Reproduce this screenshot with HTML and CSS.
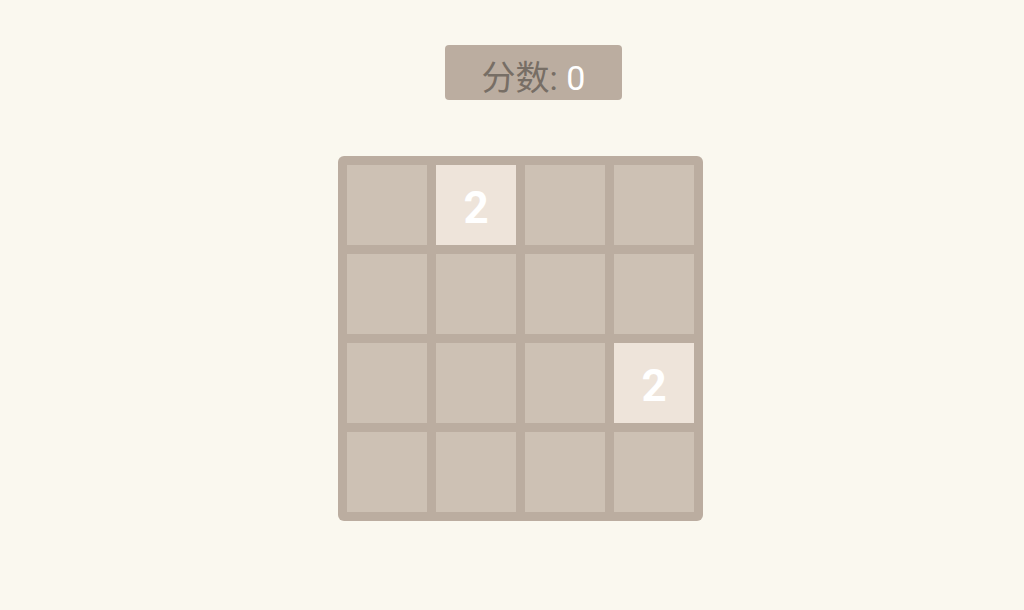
FILE: index.html
```html
<!DOCTYPE html>
<html lang="zh-CN">
<head>
    <meta charset="UTF-8">
    <title>2048</title>
    <link rel="stylesheet" href="styles.css">
</head>
<body>
    <div class="game">
        <div class="score-box">
            <p class="score-text"><span class="score-label">分数:</span> <span class="score-value">0</span></p>
        </div>

        <div class="board">
            <div class="cell"></div>
            <div class="cell tile-2">2</div>
            <div class="cell"></div>
            <div class="cell"></div>

            <div class="cell"></div>
            <div class="cell"></div>
            <div class="cell"></div>
            <div class="cell"></div>

            <div class="cell"></div>
            <div class="cell"></div>
            <div class="cell"></div>
            <div class="cell tile-2">2</div>

            <div class="cell"></div>
            <div class="cell"></div>
            <div class="cell"></div>
            <div class="cell"></div>
        </div>
    </div>
</body>
</html>
```

FILE: styles.css
```css
* {
    box-sizing: border-box;
    margin: 0;
    padding: 0;
}

body {
    font-family: Roboto, "Noto Sans CJK SC", sans-serif;
    background-color: #faf8ef;
    min-height: 100vh;
}

.game {
    display: flex;
    flex-direction: column;
    align-items: flex-start;
    padding-top: 45px;
    padding-left: 338px;
}

.score-box {
    margin-left: 107px;
    width: 177px;
    height: 55px;
    padding-top: 11px;
    background-color: #bbada0;
    border-radius: 4px;
    display: flex;
    align-items: center;
    justify-content: center;
}

.score-text {
    font-size: 34px;
    line-height: 1;
}

.score-label {
    color: #776e65;
}

.score-value {
    color: #fff;
}

.board {
    margin-top: 56px;
    width: 365px;
    height: 365px;
    padding: 9px;
    background-color: #bbada0;
    border-radius: 6px;
    display: grid;
    grid-template-columns: repeat(4, 1fr);
    grid-template-rows: repeat(4, 1fr);
    gap: 9px;
}

.cell {
    background-color: #cdc1b4;
    display: flex;
    align-items: center;
    justify-content: center;
    padding-top: 5px;
    font-size: 44px;
    font-weight: bold;
    color: #fff;
}

.tile-2 {
    background-color: #eee4da;
}
```
